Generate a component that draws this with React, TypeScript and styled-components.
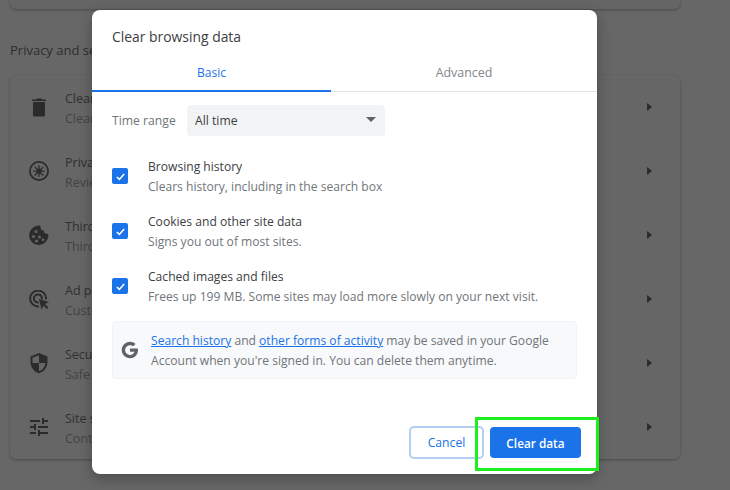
import React from "react";
import styled, { createGlobalStyle } from "styled-components";

const Global = createGlobalStyle`
  html, body { margin: 0; padding: 0; width: 730px; height: 490px; overflow: hidden; background: #676767; }
  * { box-sizing: border-box; }
  body { font-family: "Open Sans", "Noto Sans", sans-serif; -webkit-font-smoothing: antialiased; }
`;

const Page = styled.div`
  position: relative;
  width: 730px;
  height: 490px;
  background: #676767;
  padding: 0 50px 0 10px;
  display: flex;
  flex-direction: column;
  overflow: hidden;
`;
const TopCard = styled.div`
  height: 9px;
  margin-bottom: 31px;
  background: #656565;
  border-radius: 0 0 6px 6px;
  box-shadow: 0 1px 3px rgba(0, 0, 0, 0.28);
`;
const SectionTitle = styled.h2`
  margin: 0 0 15px;
  height: 20px;
  font-size: 13px;
  line-height: 20px;
  font-weight: 400;
  color: #2e2e2e;
`;
const Card = styled.div`
  height: 384px;
  background: #666;
  border-radius: 6px;
  box-shadow: 0 1px 3px rgba(0, 0, 0, 0.28);
`;
const Row = styled.div`
  height: 64px;
  display: flex;
  align-items: center;
  padding: 0 28px 0 17px;
`;
const RowIcon = styled.svg`
  width: 24px;
  height: 24px;
  flex: none;
  fill: #2b2b2b;
`;
const RowText = styled.div`
  margin: 3px 0 0 14px;
  flex: 1;
  display: flex;
  flex-direction: column;
  font-size: 12.5px;
  line-height: 20px;
  color: #303030;
`;
const RowSub = styled.span`
  color: #434343;
`;
const Arrow = styled.span`
  width: 0;
  height: 0;
  border-left: 5px solid #2b2b2b;
  border-top: 4px solid transparent;
  border-bottom: 4px solid transparent;
`;

const Dialog = styled.div`
  position: absolute;
  left: 92px;
  top: 10px;
  width: 505px;
  height: 464px;
  background: #fff;
  border-radius: 8px;
  box-shadow: 0 4px 14px rgba(0, 0, 0, 0.28);
  display: flex;
  flex-direction: column;
`;
const DialogTitle = styled.h1`
  margin: 0;
  padding: 17px 20px 0;
  height: 45px;
  font-size: 13.9px;
  line-height: 20px;
  font-weight: 400;
  color: #3c4043;
`;
const Tabs = styled.div`
  display: flex;
  height: 37px;
  border-bottom: 1px solid #dfe1e5;
`;
const Tab = styled.div<{ $active?: boolean; $w: number }>`
  width: ${(p) => p.$w}px;
  height: 37px;
  padding-top: 8px;
  text-align: center;
  font-size: ${(p) => (p.$active ? 12 : 12.4)}px;
  line-height: 20px;
  font-weight: ${(p) => (p.$active ? 500 : 400)};
  color: ${(p) => (p.$active ? "#1a73e8" : "#80868b")};
  border-bottom: ${(p) => (p.$active ? "2px solid #1a73e8" : "none")};
`;
const Body = styled.div`
  flex: 1;
  padding: 13px 20px 0;
  display: flex;
  flex-direction: column;
`;
const RangeRow = styled.div`
  display: flex;
  align-items: center;
  height: 31px;
  margin-bottom: 13px;
`;
const RangeLabel = styled.span`
  width: 75px;
  font-size: 12.2px;
  color: #70757a;
`;
const Select = styled.div`
  width: 198px;
  height: 31px;
  background: #f1f3f4;
  border-radius: 4px;
  display: flex;
  align-items: center;
  justify-content: space-between;
  padding: 0 9px 0 8px;
  font-size: 12.2px;
  color: #3c4043;
`;
const Caret = styled.span`
  width: 0;
  height: 0;
  margin-top: -3px;
  border-top: 5px solid #5f6368;
  border-left: 5px solid transparent;
  border-right: 5px solid transparent;
`;
const CheckRow = styled.div`
  height: 55px;
  display: flex;
  align-items: center;
`;
const Box = styled.span`
  width: 16px;
  height: 16px;
  flex: none;
  margin-top: -1px;
  border-radius: 2px;
  background: #1a73e8;
  display: flex;
  align-items: center;
  justify-content: center;
`;
const CheckText = styled.div`
  margin-left: 20px;
  display: flex;
  flex-direction: column;
  font-size: 12.1px;
  line-height: 20px;
  color: #3c4043;
`;
const CheckSub = styled.span`
  color: #70757a;
`;
const Info = styled.div`
  margin-top: 7px;
  width: 465px;
  height: 58px;
  background: #f8f9fa;
  border: 1px solid #f1f3f4;
  border-radius: 4px;
  display: flex;
  align-items: center;
  padding: 0 0 0 8px;
`;
const InfoText = styled.p`
  margin: 2px 0 0 12px;
  font-size: 12.1px;
  line-height: 20px;
  color: #70757a;
  white-space: nowrap;
`;
const InfoLink = styled.a`
  color: #1a73e8;
  text-decoration: underline;
`;
const Actions = styled.div`
  display: flex;
  justify-content: flex-end;
  align-items: center;
  gap: 6px;
  padding: 0 16px 15px 0;
`;
const CancelBtn = styled.button`
  width: 75px;
  height: 33px;
  padding: 0;
  font: 500 12.2px "Open Sans", sans-serif;
  color: #1a73e8;
  background: #fff;
  border: 2px solid #b3cdf3;
  border-radius: 5px;
`;
const PrimaryBtn = styled.button`
  width: 91px;
  height: 31px;
  padding: 0;
  font: 600 11.8px "Open Sans", sans-serif;
  color: #fff;
  background: #1a73e8;
  border: none;
  border-radius: 4px;
`;
const Highlight = styled.div`
  position: absolute;
  left: 475px;
  top: 417px;
  width: 124px;
  height: 54px;
  border: 3px solid #1cf01c;
  pointer-events: none;
`;

const icons = [
  <path d="M6 7h12v13a1.5 1.5 0 0 1-1.5 1.5h-9A1.5 1.5 0 0 1 6 20V7zM5 4.5h4L10 3.5h4l1 1h4V6H5V4.500z" />,
  <path fillRule="evenodd" d="M12 2a10 10 0 1 0 0 20 10 10 0 0 0 0-20zm0 1.700a8.300 8.300 0 1 1 0 16.600 8.300 8.300 0 0 1 0-16.600zM11.600 6h.8l.4 4.200 3.300-2.700.6.600-2.700 3.300 4 .4v.8l-4 .4 2.700 3.300-.6.600-3.300-2.700-.4 4h-.8l-.4-4-3.300 2.700-.6-.6 2.700-3.300-4-.4v-.8l4-.4-2.700-3.300.6-.6 3.300 2.700z" />,
  <path fillRule="evenodd" d="M12 2.500c1 0 1.500.4 1.500 1.500a3.500 3.500 0 0 0 3.200 3.500 3.500 3.500 0 0 0 3.300 3.300c1 0 1.500.7 1.500 1.700a9.700 9.700 0 1 1-9.500-10zM9 7a1.500 1.500 0 1 0 0 3 1.500 1.500 0 0 0 0-3zm-2.500 5a1.500 1.500 0 1 0 0 3 1.500 1.500 0 0 0 0-3zm6 .5a1.500 1.500 0 1 0 0 3 1.500 1.500 0 0 0 0-3zm-3 4a1.500 1.500 0 1 0 0 3 1.500 1.500 0 0 0 0-3zm6.500-1a1.300 1.300 0 1 0 0 2.600 1.300 1.300 0 0 0 0-2.600z" />,
  <path fillRule="evenodd" d="M11 2.500a9 9 0 0 1 9 9c0 .5 0 .9-.1 1.300l-1.900-.6.100-.7a7 7 0 1 0-7 7h.5l.6 1.900-1.100.1a9 9 0 0 1 0-18zm0 4a5 5 0 0 1 5 5l-.1 1-2-.6v-.4a3 3 0 1 0-3 3h.4l.6 2h-1a5 5 0 0 1 .1-10zm1 5.500 10 3-4 2 3.500 3.500-1.500 1.500-3.500-3.500-2 4z" />,
  <path fillRule="evenodd" d="M12 2l8.500 3.500V11c0 5.200-3.600 10-8.500 11.200C7.100 21 3.500 16.200 3.500 11V5.500L12 2zm0 2.200L5.500 6.800V11c0 .3 0 .6.100 1H12V4.200zM12 12v8.300c3.400-1 6-4.400 6.400-8.300H12z" />,
  <path d="M3 17h6v2H3v-2zm0-12h10v2H3V5zm10 16v-2h8v-2h-8v-2h-2v6h2zM7 9v2H3v2h4v2h2V9H7zm14 4v-2H11v2h10zm-6-4h2V7h4V5h-4V3h-2v6z" />,
];
const rows = [
  ["Clear browsing data", "Clear history, cookies, cache, and more"],
  ["Privacy Guide", "Review key privacy and security controls"],
  ["Third-party cookies", "Third-party cookies are blocked in Incognito"],
  ["Ad privacy", "Customize the info used by sites to show you ads"],
  ["Security", "Safe Browsing and other security settings"],
  ["Site settings", "Controls what information sites can use and show"],
];
const checks = [
  ["Browsing history", "Clears history, including in the search box"],
  ["Cookies and other site data", "Signs you out of most sites."],
  ["Cached images and files", "Frees up 199 MB. Some sites may load more slowly on your next visit."],
];

export default function App() {
  return (
    <Page>
      <Global />
      <TopCard />
      <SectionTitle>Privacy and security</SectionTitle>
      <Card>
        {rows.map(([t, s], i) => (
          <Row key={t}>
            <RowIcon viewBox="0 0 24 24">{icons[i]}</RowIcon>
            <RowText>
              {t}
              <RowSub>{s}</RowSub>
            </RowText>
            <Arrow />
          </Row>
        ))}
      </Card>
      <Dialog>
        <DialogTitle>Clear browsing data</DialogTitle>
        <Tabs>
          <Tab $active $w={239}>Basic</Tab>
          <Tab $w={266}>Advanced</Tab>
        </Tabs>
        <Body>
          <RangeRow>
            <RangeLabel>Time range</RangeLabel>
            <Select>
              All time
              <Caret />
            </Select>
          </RangeRow>
          {checks.map(([t, s]) => (
            <CheckRow key={t}>
              <Box>
                <svg width="11" height="11" viewBox="0 0 12 12">
                  <path d="M2 6.500 4.800 9.200 10 3.200" fill="none" stroke="#fff" strokeWidth="1.700" />
                </svg>
              </Box>
              <CheckText>
                {t}
                <CheckSub>{s}</CheckSub>
              </CheckText>
            </CheckRow>
          ))}
          <Info>
            <svg width="18" height="18" viewBox="0 0 48 48">
              <path
                fill="#5f6368"
                d="M24 20v8.500h11.700C34.600 33.800 30 37 24 37c-7.200 0-13-5.800-13-13s5.800-13 13-13c3.300 0 6.300 1.200 8.600 3.300l6.200-6.200C34.900 4.400 29.800 2 24 2 11.800 2 2 11.800 2 24s9.800 22 22 22c11.500 0 21.300-8.300 21.300-22 0-1.400-.2-2.800-.5-4H24z"
              />
            </svg>
            <InfoText>
              <InfoLink>Search history</InfoLink> and <InfoLink>other forms of activity</InfoLink> may be saved in your Google
              <br />
              Account when you're signed in. You can delete them anytime.
            </InfoText>
          </Info>
        </Body>
        <Actions>
          <CancelBtn>Cancel</CancelBtn>
          <PrimaryBtn>Clear data</PrimaryBtn>
        </Actions>
      </Dialog>
      <Highlight />
    </Page>
  );
}
